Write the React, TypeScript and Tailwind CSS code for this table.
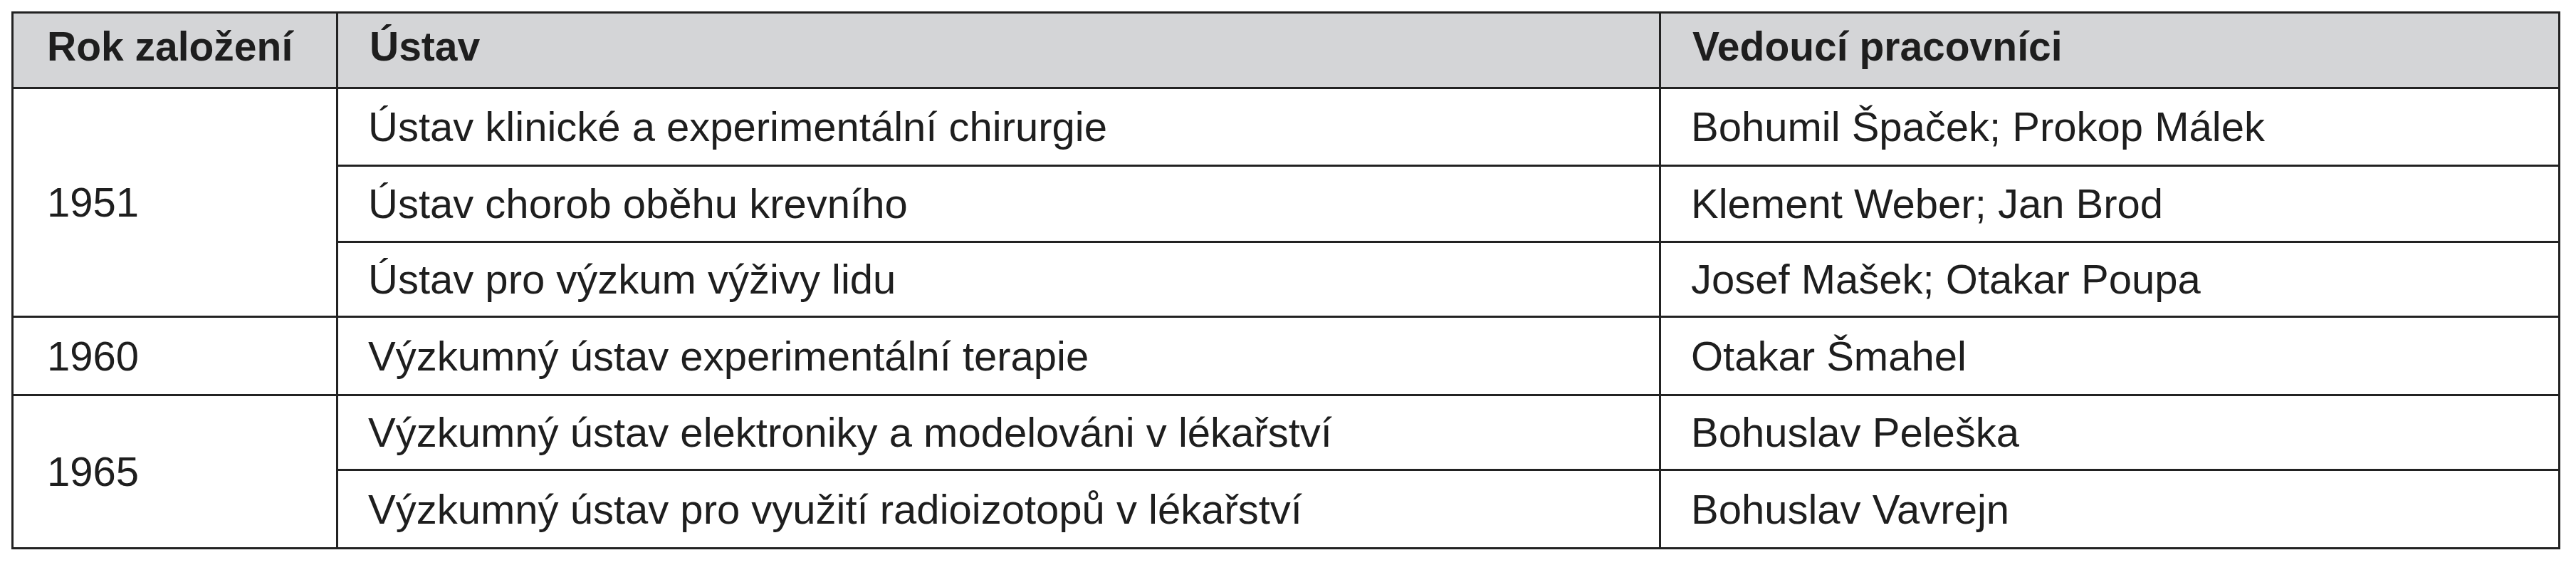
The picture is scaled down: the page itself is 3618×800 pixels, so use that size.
const rows = [
  { year: '1951', span: 3, ustav: 'Ústav klinické a experimentální chirurgie', lide: 'Bohumil Špaček; Prokop Málek', h: 'h-[109px]' },
  { ustav: 'Ústav chorob oběhu krevního', lide: 'Klement Weber; Jan Brod', h: 'h-[107px]' },
  { ustav: 'Ústav pro výzkum výživy lidu', lide: 'Josef Mašek; Otakar Poupa', h: 'h-[105px]' },
  { year: '1960', span: 1, ustav: 'Výzkumný ústav experimentální terapie', lide: 'Otakar Šmahel', h: 'h-[110px]' },
  { year: '1965', span: 2, ustav: 'Výzkumný ústav elektroniky a modelováni v lékařství', lide: 'Bohuslav Peleška', h: 'h-[105px]' },
  { ustav: 'Výzkumný ústav pro využití radioizotopů v lékařství', lide: 'Bohuslav Vavrejn', h: 'h-[110px]' },
];

const cell = 'border-[3px] border-[#222] align-middle';

export default function App() {
  return (
    <div className="w-[3618px] h-[800px] bg-white pt-[16px] pl-[16px] font-['Liberation_Sans',Arial,sans-serif] text-[58px] leading-none text-[#1e1e1e]">
      <table className="border-collapse table-fixed w-[3580px]">
        <colgroup>
          <col className="w-[456px]" />
          <col className="w-[1858px]" />
          <col className="w-[1263px]" />
        </colgroup>
        <thead>
          <tr className="h-[106px] bg-[#d4d5d7] text-[57px]">
            <th className={`${cell} text-left font-bold pl-[47px] pb-[10px]`}>Rok založení</th>
            <th className={`${cell} text-left font-bold pl-[44px] pb-[10px]`}>Ústav</th>
            <th className={`${cell} text-left font-bold pl-[44px] pb-[10px]`}>Vedoucí pracovníci</th>
          </tr>
        </thead>
        <tbody>
          {rows.map((r, i) => (
            <tr key={i} className={r.h}>
              {r.year && (
                <td rowSpan={r.span} className={`${cell} pl-[47px]`}>
                  {r.year}
                </td>
              )}
              <td className={`${cell} pl-[42px]`}>{r.ustav}</td>
              <td className={`${cell} pl-[42px]`}>{r.lide}</td>
            </tr>
          ))}
        </tbody>
      </table>
    </div>
  );
}
